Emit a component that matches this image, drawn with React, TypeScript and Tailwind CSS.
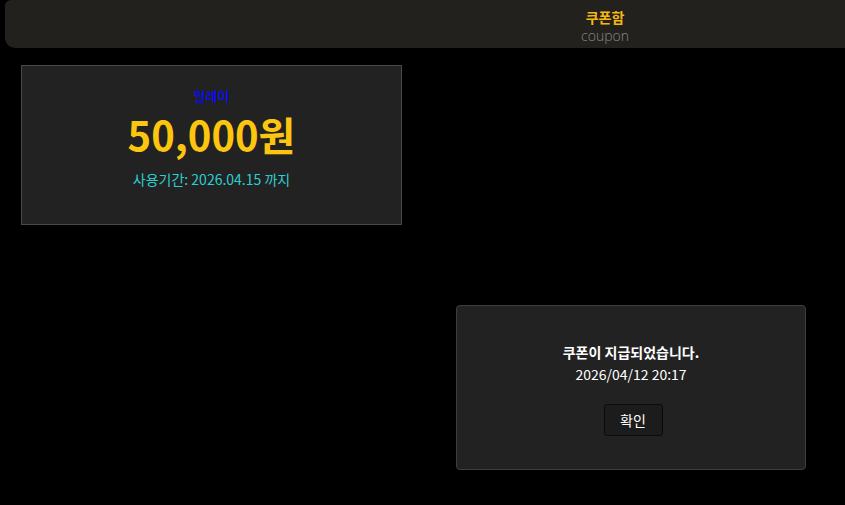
const font = { fontFamily: '"Noto Sans CJK KR", "Noto Sans", sans-serif' };

export default function App() {
  return (
    <div className="relative w-[845px] h-[505px] overflow-hidden bg-black" style={font}>
      <header className="ml-[5px] w-[1200px] h-[48px] rounded-[10px] rounded-t-[6px] bg-[#23211e] flex flex-col items-center justify-center pt-[3px]">
        <div className="text-[14px] leading-[20px] font-bold text-[#f6b80f]">쿠폰함</div>
        <div
          className="text-[14px] leading-[17px] font-light text-[#8a8782]"
          style={{ fontFamily: '"Open Sans", sans-serif' }}
        >
          coupon
        </div>
      </header>

      <div className="ml-[21px] mt-[17px] w-[381px] h-[160px] border border-[#4a4a4a] bg-[#222222] flex flex-col items-center pt-[21px]">
        <div className="text-[13px] leading-[18px] font-medium text-[#0a0aff]">릴레이</div>
        <div className="text-[40px] leading-[44px] font-bold text-[#fcc510] mt-[7px]">50,000원</div>
        <div className="text-[14px] leading-[20px] text-[#2ccfd0] mt-[13px]">사용기간: 2026.04.15 까지</div>
      </div>

      <div className="absolute left-[456px] top-[305px] w-[350px] h-[165px] rounded-[4px] border border-[#3e3e3e] bg-[#222222] flex flex-col items-center pt-[36px]">
        <div className="text-[14px] leading-[20px] font-bold text-white">쿠폰이 지급되었습니다.</div>
        <div className="text-[14px] leading-[20px] text-white mt-[2px]">2026/04/12 20:17</div>
        <button className="mt-[20px] ml-[4px] w-[59px] h-[32px] rounded-[3px] border border-[#0a0a0a] bg-[#1c1c1c] text-[14px] text-white">
          확인
        </button>
      </div>
    </div>
  );
}
